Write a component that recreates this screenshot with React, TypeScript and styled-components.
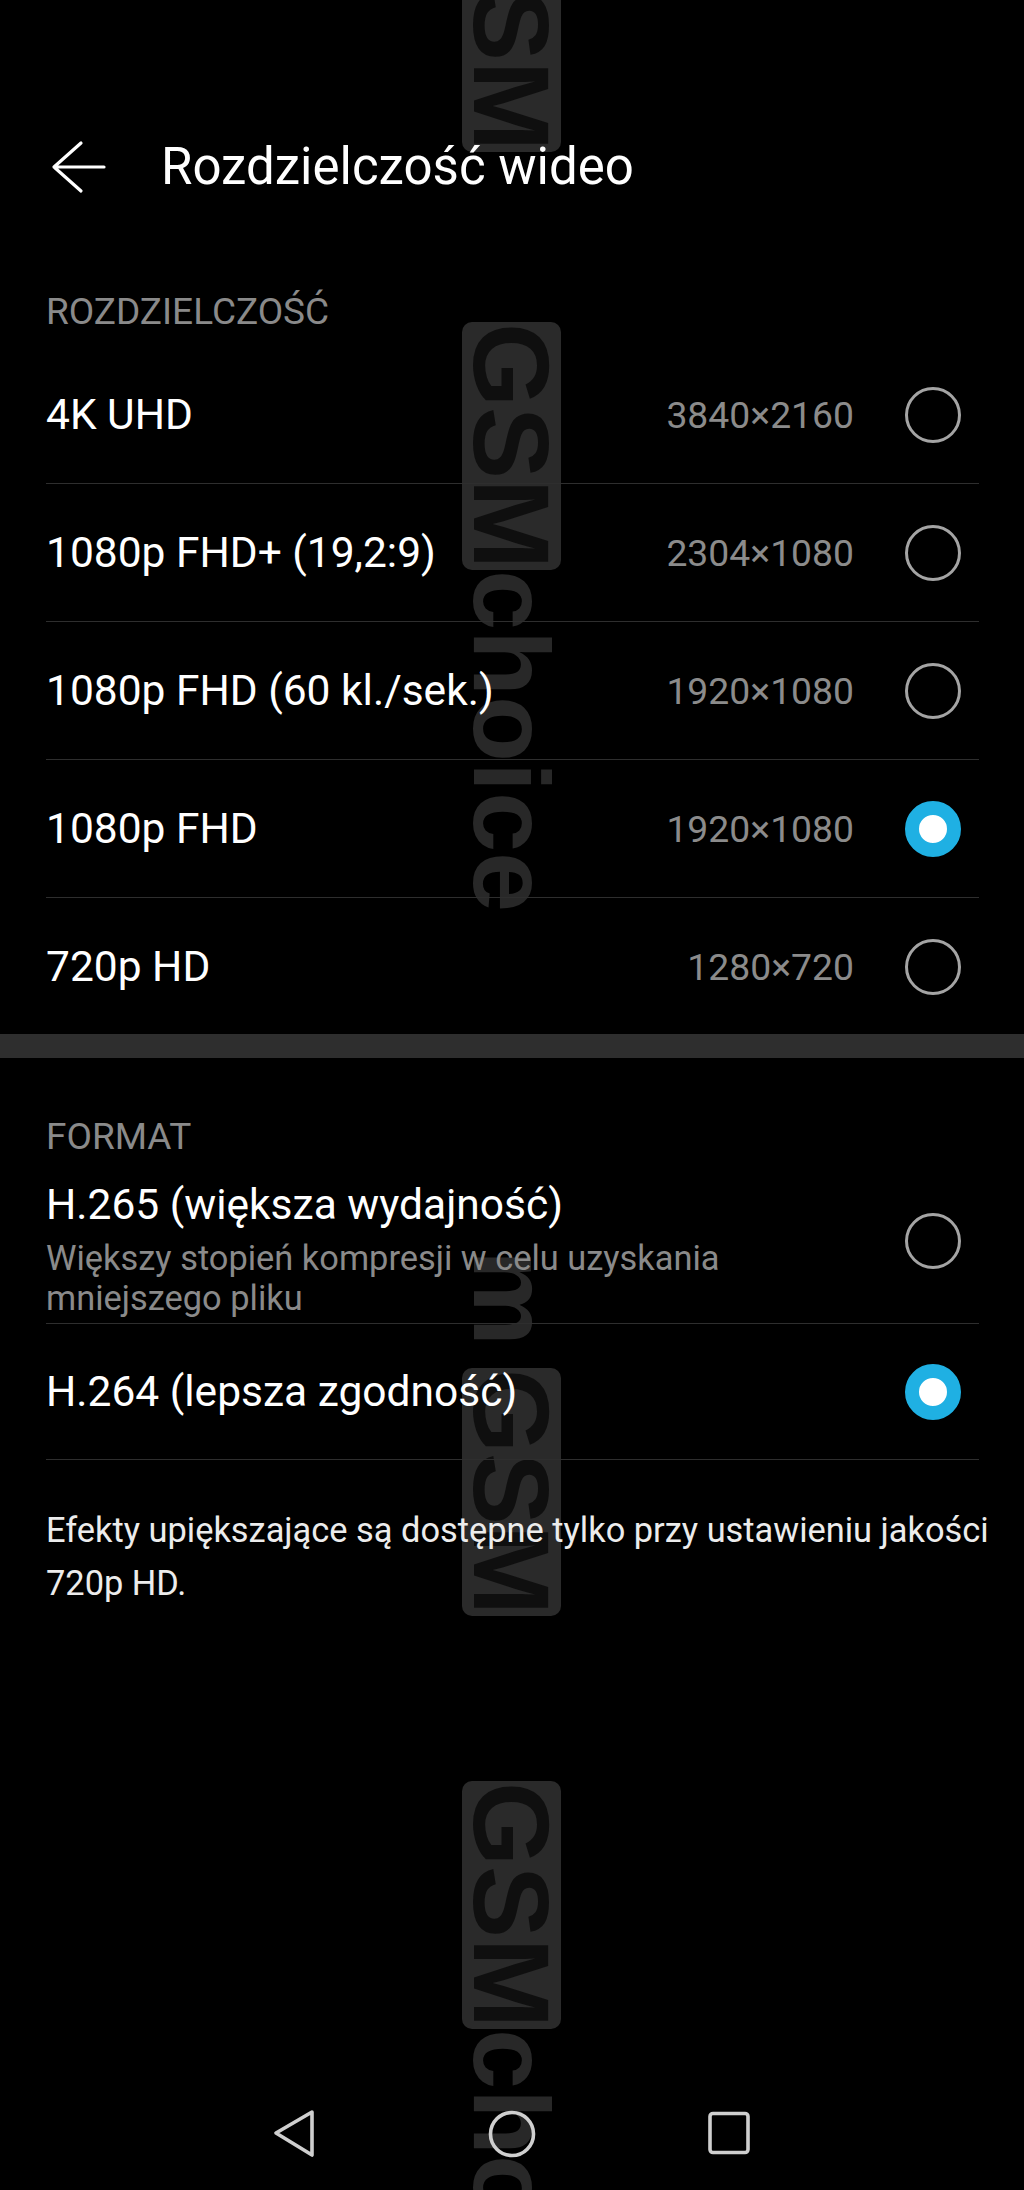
import React from 'react'
import styled, { createGlobalStyle } from 'styled-components'

const GlobalStyle = createGlobalStyle`
  html, body {
    margin: 0;
    padding: 0;
    background: #000;
  }
  body {
    font-family: Roboto, 'Noto Sans', sans-serif;
    -webkit-font-smoothing: antialiased;
  }
`

const Screen = styled.div`
  position: relative;
  width: 1024px;
  height: 2190px;
  overflow: hidden;
  background: #000;
  display: flex;
  flex-direction: column;
`

const Content = styled.div`
  position: relative;
  z-index: 1;
  flex: 1;
  display: flex;
  flex-direction: column;
`

const AppBar = styled.header`
  display: flex;
  align-items: center;
  height: 94px;
  margin-top: 120px;
  padding-left: 46px;
`

const BackButton = styled.button`
  display: flex;
  align-items: center;
  justify-content: center;
  width: 64px;
  height: 64px;
  padding: 0;
  border: none;
  background: transparent;
  margin-right: 51px;
`

const Title = styled.h1`
  margin: 0;
  font-size: 51px;
  font-weight: 400;
  color: #fff;
  line-height: 60px;
`

const SectionLabel = styled.div<{ $top: number; $bottom: number }>`
  padding: ${(p) => p.$top}px 46px ${(p) => p.$bottom}px;
  font-size: 37px;
  line-height: 44px;
  color: #8a8a8a;
  text-transform: uppercase;
`

const OptionRow = styled.div<{ $divider?: boolean; $h?: number }>`
  display: flex;
  align-items: center;
  margin: 0 45px 0 46px;
  padding-right: 18px;
  min-height: ${(p) => p.$h ?? 138}px;
  box-sizing: border-box;
  border-bottom: ${(p) => (p.$divider ? '1px solid #2e2e2e' : 'none')};
`

const OptionText = styled.div<{ $tall?: boolean }>`
  flex: 1;
  display: flex;
  flex-direction: column;
  margin-right: 51px;
  padding: ${(p) => (p.$tall ? '21px 0 5px' : '0')};
`

const OptionLabel = styled.span`
  font-size: 42.5px;
  line-height: 50px;
  color: #fff;
`

const OptionHint = styled.span`
  margin-top: 8px;
  font-size: 34.4px;
  line-height: 40px;
  color: #8a8a8a;
`

const Resolution = styled.span`
  font-size: 37.3px;
  color: #8b8b8b;
  margin-right: 51px;
`

const Radio = styled.span<{ $checked?: boolean }>`
  flex: none;
  width: 56px;
  height: 56px;
  box-sizing: border-box;
  border-radius: 50%;
  border: ${(p) => (p.$checked ? '14px solid #1fb0e3' : '3px solid #a4a4a4')};
  background: ${(p) => (p.$checked ? '#fff' : 'transparent')};
`

const GroupDivider = styled.div`
  height: 24px;
  margin-top: -2px;
  background: #2e2e2e;
`

const Note = styled.p`
  margin: 44px 16px 0 46px;
  font-size: 34.4px;
  line-height: 53px;
  color: #ececec;
`

const NavBar = styled.nav`
  margin-top: auto;
  height: 112px;
  display: flex;
  align-items: center;
  justify-content: center;
  gap: 158px;
`

const NavButton = styled.span`
  width: 60px;
  height: 60px;
  display: flex;
  align-items: center;
  justify-content: center;
`

const Watermark = styled.div<{ $x: number; $y: number }>`
  position: absolute;
  z-index: 0;
  left: ${(p) => p.$x}px;
  top: ${(p) => p.$y}px;
  transform-origin: top left;
  transform: rotate(90deg);
  display: flex;
  height: 99px;
  font-family: 'Liberation Sans', Arial, sans-serif;
  font-weight: 700;
  font-size: 108px;
  line-height: 99px;
  white-space: nowrap;
  pointer-events: none;
`

const WatermarkBadge = styled.span`
  display: block;
  padding: 0 1px;
  border-radius: 10px;
  background: #2a2a2a;
  color: #0f0f0f;
`

const WatermarkTail = styled.span`
  display: block;
  color: #282828;
`

type Option = { label: string; value: string; checked?: boolean }

const resolutions: Option[] = [
  { label: '4K UHD', value: '3840×2160' },
  { label: '1080p FHD+ (19,2:9)', value: '2304×1080' },
  { label: '1080p FHD (60 kl./sek.)', value: '1920×1080' },
  { label: '1080p FHD', value: '1920×1080', checked: true },
  { label: '720p HD', value: '1280×720' },
]

const BackArrow = () => (
  <svg width="64" height="64" viewBox="0 0 64 64" fill="none">
    <path
      d="M35 8 L8 32 L35 56 M8 32 H58"
      stroke="#fff"
      strokeWidth="3.2"
      strokeLinecap="round"
      strokeLinejoin="round"
    />
  </svg>
)

const NavBack = () => (
  <svg width="48" height="52" viewBox="0 0 48 52" fill="none">
    <path
      d="M42 4 L6 25 L42 47 Z"
      stroke="#cfcfcf"
      strokeWidth="3.6"
      strokeLinejoin="round"
    />
  </svg>
)

const NavHome = () => (
  <svg width="52" height="52" viewBox="0 0 52 52" fill="none">
    <circle cx="26" cy="26" r="21.5" stroke="#cfcfcf" strokeWidth="3.6" />
  </svg>
)

const NavRecent = () => (
  <svg width="48" height="48" viewBox="0 0 48 48" fill="none">
    <rect x="4" y="3.5" width="38" height="39" rx="3" stroke="#cfcfcf" strokeWidth="3.6" />
  </svg>
)

const App: React.FC = () => {
  return (
    <Screen>
      <GlobalStyle />

      <Watermark $x={561} $y={-96}>
        <WatermarkBadge>GSM</WatermarkBadge>
      </Watermark>
      <Watermark $x={561} $y={322}>
        <WatermarkBadge>GSM</WatermarkBadge>
        <WatermarkTail>choice</WatermarkTail>
      </Watermark>
      <Watermark $x={561} $y={1250}>
        <WatermarkTail>m</WatermarkTail>
      </Watermark>
      <Watermark $x={561} $y={1368}>
        <WatermarkBadge>GSM</WatermarkBadge>
      </Watermark>
      <Watermark $x={561} $y={1781}>
        <WatermarkBadge>GSM</WatermarkBadge>
        <WatermarkTail>choice</WatermarkTail>
      </Watermark>

      <Content>
        <AppBar>
          <BackButton aria-label="Wstecz">
            <BackArrow />
          </BackButton>
          <Title>Rozdzielczość wideo</Title>
        </AppBar>

        <SectionLabel $top={76} $bottom={12}>Rozdzielczość</SectionLabel>
        {resolutions.map((r, i) => (
          <OptionRow key={r.label} $divider={i < resolutions.length - 1}>
            <OptionText>
              <OptionLabel>{r.label}</OptionLabel>
            </OptionText>
            <Resolution>{r.value}</Resolution>
            <Radio $checked={r.checked} />
          </OptionRow>
        ))}

        <GroupDivider />

        <SectionLabel $top={57} $bottom={0}>Format</SectionLabel>
        <OptionRow $divider>
          <OptionText $tall>
            <OptionLabel>H.265 (większa wydajność)</OptionLabel>
            <OptionHint>Większy stopień kompresji w celu uzyskania mniejszego pliku</OptionHint>
          </OptionText>
          <Radio />
        </OptionRow>
        <OptionRow $divider $h={136}>
          <OptionText>
            <OptionLabel>H.264 (lepsza zgodność)</OptionLabel>
          </OptionText>
          <Radio $checked />
        </OptionRow>

        <Note>
          Efekty upiększające są dostępne tylko przy ustawieniu jakości 720p HD.
        </Note>

        <NavBar>
          <NavButton>
            <NavBack />
          </NavButton>
          <NavButton>
            <NavHome />
          </NavButton>
          <NavButton>
            <NavRecent />
          </NavButton>
        </NavBar>
      </Content>
    </Screen>
  )
}

export default App
